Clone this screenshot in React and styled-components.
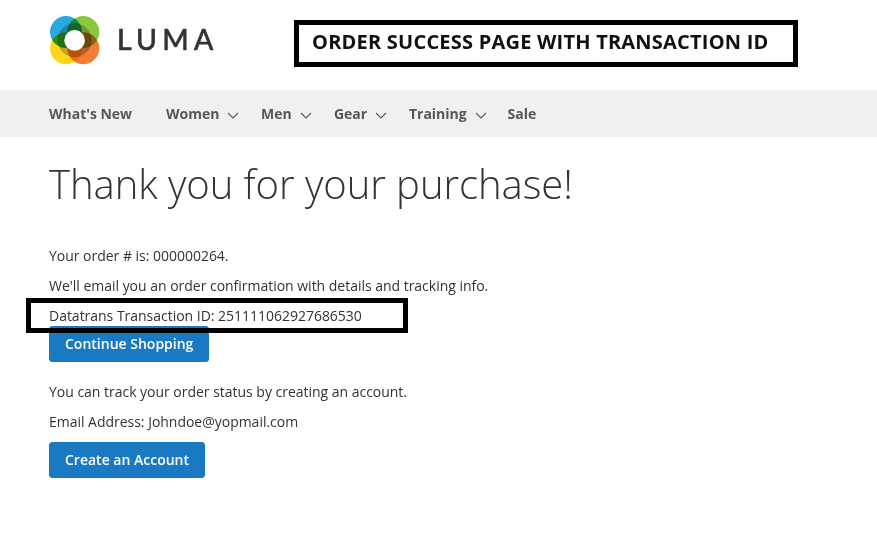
import React from "react";
import styled, { createGlobalStyle } from "styled-components";

const Global = createGlobalStyle`
  html, body { margin: 0; padding: 0; background: #fff; }
  body { font-family: "Open Sans", "Liberation Sans", sans-serif; color: #333; font-size: 14px; }
`;
const Page = styled.div`position: relative; width: 877px; height: 558px; overflow: hidden;`;
const Header = styled.header`height: 90px; padding-left: 49px; display: flex; align-items: flex-start; box-sizing: border-box; padding-top: 15px;`;
const Nav = styled.nav`height: 47px; background: #f0f0f0; padding-left: 49px; display: flex; align-items: center;`;
const NavItem = styled.div`
  display: flex; align-items: center; font-weight: 700; font-size: 14px; color: #575757;
  letter-spacing: -0.02px; width: ${p => p.$w}px;
`;
const Chevron = styled.svg`width: 12px; height: 7px; margin-left: 8px; margin-top: 3px; flex: none;`;
const Main = styled.main`padding-left: 49px;`;
const Title = styled.h1`margin: 19px 0 0; font-weight: 300; font-size: 40px; line-height: 56px; color: #333; letter-spacing: -0.035px;`;
const Para = styled.p`margin: 0 0 ${p => (p.$last ? 0 : 10)}px; line-height: 20px; letter-spacing: -0.02px;`;
const Block = styled.div`margin-top: ${p => p.$top}px;`;
const Button = styled.button`
  display: block; border: 1px solid #1979c3; background: #1979c3; color: #fff; border-radius: 3px;
  font-family: inherit; font-weight: 600; font-size: 14px; height: 36px; padding: 0 15px 2px; box-sizing: border-box;
  width: ${p => p.$w}px; white-space: nowrap; text-align: left;
`;
const Annotation = styled.div`
  position: absolute; box-sizing: border-box; border: 5px solid #000;
  left: ${p => p.$x}px; top: ${p => p.$y}px; width: ${p => p.$w}px; height: ${p => p.$h}px;
`;
const AnnotationTitle = styled.div`
  font-family: "Open Sans", sans-serif; font-weight: 700; font-size: 20px; color: #111; line-height: 33px;
  padding-left: 13px; white-space: nowrap; letter-spacing: 0.22px;
`;
const LogoText = styled.text`font-family: Lato, "Open Sans", sans-serif; font-size: 28.5px; font-weight: 400; letter-spacing: 5.2px; fill: #333; stroke: #333; stroke-width: 0.7px;`;

const Logo = () => (
  <svg width="170" height="52" viewBox="0 0 170 52" style={{ display: "block" }}>
    <g style={{ isolation: "isolate" }}>
      <circle cx="17" cy="17" r="16" fill="#29a9e0" style={{ mixBlendMode: "multiply" }} />
      <circle cx="34.3" cy="17" r="16" fill="#8cc63f" style={{ mixBlendMode: "multiply" }} />
      <circle cx="17" cy="33.3" r="16" fill="#ffd71a" style={{ mixBlendMode: "multiply" }} />
      <circle cx="34.3" cy="33.3" r="16" fill="#f47b36" style={{ mixBlendMode: "multiply" }} />
      <circle cx="25.6" cy="25.2" r="17" fill="#c4c4c4" style={{ mixBlendMode: "multiply" }} />
    </g>
    <circle cx="25.6" cy="25.4" r="10.3" fill="#fff" />
    <LogoText x="68" y="35">LUMA</LogoText>
  </svg>
);
const Down = () => (
  <Chevron viewBox="0 0 12 7"><path d="M1 1l5 5 5-5" fill="none" stroke="#575757" strokeWidth="1.1" /></Chevron>
);

export default function App() {
  return (
    <Page>
      <Global />
      <Header><Logo /></Header>
      <Nav>
        <NavItem $w={117}>What's New</NavItem>
        <NavItem $w={95}>Women<Down /></NavItem>
        <NavItem $w={73}>Men<Down /></NavItem>
        <NavItem $w={75}>Gear<Down /></NavItem>
        <NavItem $w={98.5}>Training<Down /></NavItem>
        <NavItem $w={40}>Sale</NavItem>
      </Nav>
      <Main>
        <Title>Thank you for your purchase!</Title>
        <Block $top={34}>
          <Para>Your order # is: 000000264.</Para>
          <Para>We'll email you an order confirmation with details and tracking info.</Para>
          <Para $last>Datatrans Transaction ID: 251111062927686530</Para>
        </Block>
        <Block $top={0}><Button $w={160}>Continue Shopping</Button></Block>
        <Block $top={20}>
          <Para>You can track your order status by creating an account.</Para>
          <Para>Email Address: Johndoe@yopmail.com</Para>
        </Block>
        <Block $top={0}><Button $w={156}>Create an Account</Button></Block>
      </Main>
      <Annotation $x={294} $y={20} $w={504} $h={47}>
        <AnnotationTitle>ORDER SUCCESS PAGE WITH TRANSACTION ID</AnnotationTitle>
      </Annotation>
      <Annotation $x={26} $y={298} $w={382} $h={35} />
    </Page>
  );
}
